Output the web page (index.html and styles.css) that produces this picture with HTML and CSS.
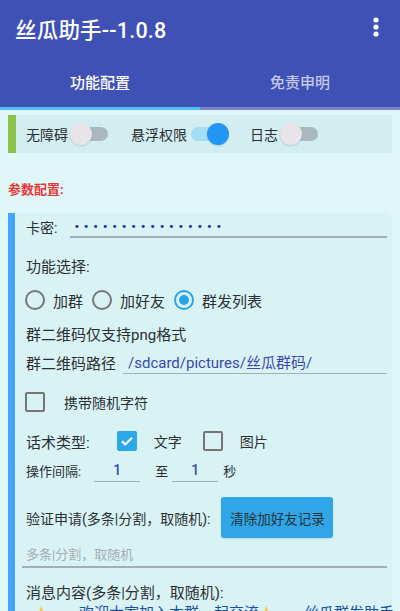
FILE: index.html
```html
<!DOCTYPE html>
<html lang="zh-CN">
<head>
  <meta charset="UTF-8">
  <meta name="viewport" content="width=device-width, initial-scale=1.0">
  <title>丝瓜助手</title>
  <link rel="stylesheet" href="styles.css">
</head>
<body>
  <!-- App bar -->
  <header class="appbar">
    <div class="toolbar">
      <h1 class="app-title">丝瓜助手--1.0.8</h1>
      <svg class="menu" width="8" height="22" viewBox="0 0 8 22">
        <circle cx="4" cy="4" r="2.6" fill="#fff"/>
        <circle cx="4" cy="11" r="2.6" fill="#fff"/>
        <circle cx="4" cy="18" r="2.6" fill="#fff"/>
      </svg>
    </div>
    <nav class="tabs">
      <div class="tab active">功能配置</div>
      <div class="tab">免责申明</div>
    </nav>
    <div class="indicator"><span></span></div>
  </header>

  <main class="content">
    <!-- Switches -->
    <div class="switch-row">
      <span class="switch-label first">无障碍</span>
      <span class="switch"></span>
      <span class="switch-label">悬浮权限</span>
      <span class="switch on"></span>
      <span class="switch-label">日志</span>
      <span class="switch"></span>
    </div>

    <p class="section-title">参数配置:</p>

    <!-- Parameters -->
    <section class="panel">
      <div class="row row-key">
        <span class="label">卡密:</span>
        <div class="field key-field"><span class="dots">••••••••••••••••</span></div>
      </div>

      <div class="row row-func">
        <span class="label big">功能选择:</span>
      </div>

      <div class="row row-radio">
        <label class="radio"><span class="circle"></span>加群</label>
        <label class="radio"><span class="circle"></span>加好友</label>
        <label class="radio"><span class="circle checked"></span>群发列表</label>
      </div>

      <div class="row row-note">
        <span class="label big">群二维码仅支持png格式</span>
      </div>

      <div class="row row-path">
        <span class="label big">群二维码路径</span>
        <div class="field path-field">/sdcard/pictures/丝瓜群码/</div>
      </div>

      <div class="row row-random">
        <span class="box"></span>
        <span class="box-text">携带随机字符</span>
      </div>

      <div class="row row-type">
        <span class="label big">话术类型:</span>
        <span class="box checked">
          <svg width="16" height="16" viewBox="0 0 16 16"><path d="M3 8.3l3.2 3.2L13 4.7" fill="none" stroke="#fff" stroke-width="2.2"/></svg>
        </span>
        <span class="box-text">文字</span>
        <span class="box"></span>
        <span class="box-text">图片</span>
      </div>

      <div class="row row-interval">
        <span class="label small">操作间隔:</span>
        <div class="field num-field">1</div>
        <span class="label small to">至</span>
        <div class="field num-field second">1</div>
        <span class="label small">秒</span>
      </div>

      <div class="row row-verify">
        <span class="label">验证申请(多条|分割，取随机):</span>
        <button class="btn">清除加好友记录</button>
      </div>

      <div class="row row-hint">多条|分割，取随机</div>

      <div class="row row-msg">
        <span class="label big">消息内容(多条|分割，取随机):</span>
      </div>

      <div class="row row-msg-text">
        <span class="star">★</span>欢迎大家加入本群一起交流<span class="star">★</span>丝瓜群发助手
      </div>
    </section>
  </main>
</body>
</html>
```

FILE: styles.css
```css
* {
  margin: 0;
  padding: 0;
  box-sizing: border-box;
}

html, body {
  width: 400px;
  height: 611px;
  overflow: hidden;
}

body {
  font-family: Roboto, "Noto Sans CJK SC", sans-serif;
  background: #e0f7fa;
  color: #2b2f33;
}

/* App bar */
.appbar {
  background: #3f51b5;
  color: #fff;
}

.toolbar {
  height: 56px;
  display: flex;
  align-items: center;
  justify-content: space-between;
  padding: 0 20px 0 15px;
}

.app-title {
  font-size: 21.5px;
  font-weight: 500;
  letter-spacing: 0.2px;
}

.menu {
  display: block;
  margin-top: -2px;
}

.tabs {
  display: flex;
  height: 51px;
}

.tab {
  flex: 1;
  display: flex;
  align-items: center;
  justify-content: center;
  font-size: 15px;
  font-weight: 500;
  color: #c5cae9;
}

.tab.active {
  color: #fff;
}

.indicator {
  height: 3px;
  background: #7986cb;
}

.indicator span {
  display: block;
  width: 50%;
  height: 100%;
  background: #4fc3f7;
}

/* Content */
.content {
  padding: 5px 8px 0;
}

.switch-row {
  height: 38px;
  display: flex;
  align-items: center;
  background: #d3eef0;
  border-left: 8px solid #8bc34a;
  font-size: 14px;
}

.switch-label {
  margin-left: 21px;
}

.switch-label.first {
  margin-left: 10px;
}

.switch {
  position: relative;
  width: 40px;
  height: 22px;
  margin-left: 2px;
}

.switch::before {
  content: "";
  position: absolute;
  left: 8px;
  top: 4px;
  width: 30px;
  height: 14px;
  border-radius: 7px;
  background: #a9b9bf;
}

.switch::after {
  content: "";
  position: absolute;
  left: 0;
  top: 0;
  width: 22px;
  height: 22px;
  border-radius: 50%;
  background: #e9e4e9;
  box-shadow: 0 1px 2px rgba(0, 0, 0, 0.15);
}

.switch.on::before {
  left: 2px;
  background: #a5dcf6;
}

.switch.on::after {
  left: 18px;
  background: #2196f3;
}

.section-title {
  color: #e53935;
  font-size: 13px;
  font-weight: 700;
  height: 60px;
  line-height: 16px;
  padding-top: 29px;
}

/* Panel */
.panel {
  background: #d9f3f5;
  border-left: 7px solid #42a5f5;
  border-radius: 0 6px 0 0;
  padding-left: 11px;
  padding-right: 5px;
  height: 400px;
}

.row {
  display: flex;
  align-items: center;
  height: 28px;
}

.label {
  font-size: 14px;
  white-space: nowrap;
}

.label.big {
  font-size: 15px;
}

.label.small {
  font-size: 13px;
}

.field {
  height: 22px;
  border-bottom: 2px solid #9fb0b6;
  display: flex;
  align-items: center;
}

.key-field {
  flex: 1;
  margin-left: 13px;
  padding-left: 4px;
}

.dots {
  color: #2233a6;
  font-size: 13px;
  font-weight: 700;
  letter-spacing: 4.8px;
}

.row-func { margin-top: 10px; }
.row-radio { margin-top: 7px; }
.row-note { margin-top: 5px; }
.row-path { margin-top: 1px; }
.row-random { margin-top: 12px; }
.row-type { margin-top: 11px; }
.row-interval { margin-top: 1px; }
.row-verify { margin-top: 13px; height: 41px; }
.row-hint { margin-top: 3px; }
.row-msg { margin-top: 9px; }
.row-msg-text { margin-top: -2px; height: 20px; align-items: flex-start; }

.radio {
  display: flex;
  align-items: center;
  font-size: 15px;
  margin-right: 10px;
}

.circle {
  width: 20px;
  height: 20px;
  border: 2px solid #767676;
  border-radius: 50%;
  margin: 0 8px 0 -1px;
  display: flex;
  align-items: center;
  justify-content: center;
}

.circle.checked {
  border-color: #29a3e3;
}

.circle.checked::after {
  content: "";
  width: 10px;
  height: 10px;
  border-radius: 50%;
  background: #29a3e3;
}

.path-field {
  flex: 1;
  height: 24px;
  margin-left: 7px;
  padding-left: 5px;
  font-size: 15px;
  color: #3949ab;
  border-bottom-width: 1.5px;
}

.box {
  width: 20px;
  height: 20px;
  border: 2px solid #767676;
  border-radius: 2px;
  display: flex;
  align-items: center;
  justify-content: center;
}

.row-random .box {
  margin-left: -1px;
}

.row-random .box-text {
  margin-left: 19px;
  font-size: 14px;
}

.row-type .box {
  margin-left: 27px;
}

.row-type .box.checked {
  background: #29a9e8;
  border-color: #29a9e8;
}

.row-type .box-text {
  margin-left: 17px;
  font-size: 14px;
}

.row-type .box + .box-text + .box {
  margin-left: 21px;
}

.num-field {
  width: 46px;
  height: 24px;
  justify-content: center;
  margin-left: 13px;
  font-size: 14px;
  font-weight: 500;
  color: #3949ab;
  border-bottom-width: 1.5px;
}

.num-field.second {
  margin-left: 4px;
  margin-right: 5px;
}

.to {
  margin-left: 15px;
}

.btn {
  margin-left: 11px;
  width: 112px;
  height: 41px;
  border: none;
  border-radius: 3px;
  background: #30a6e8;
  color: #263238;
  font-family: Roboto, "Noto Sans CJK SC", sans-serif;
  font-size: 13.5px;
  box-shadow: 0 1px 2px rgba(0, 0, 0, 0.12);
}

.row-hint {
  height: 27px;
  margin-left: -4px;
  padding-left: 4px;
  font-size: 13px;
  color: #a3aeb2;
  border-bottom: 2px solid #a0b0b6;
}

.row-msg-text {
  font-size: 15px;
  line-height: 20px;
  color: #1a4fa0;
  padding-left: 8px;
  white-space: nowrap;
}

.star {
  color: #f4c542;
  margin-right: 30px;
}
```
